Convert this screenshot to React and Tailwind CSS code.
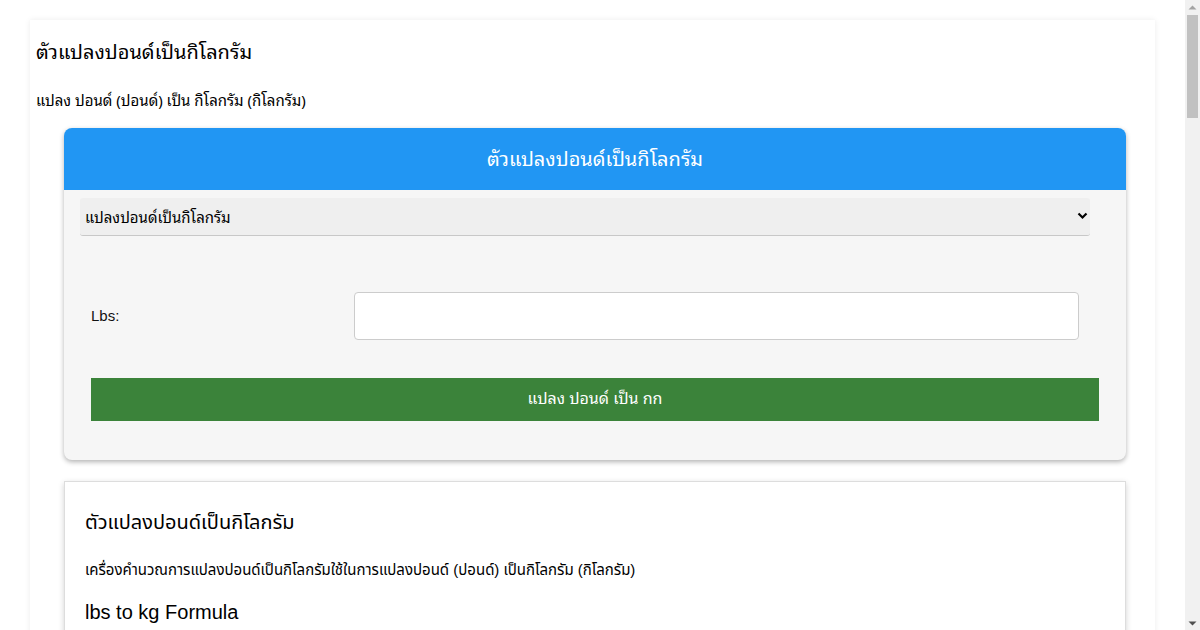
import React from 'react'

const Scrollbar = () => (
    <div className="w-[15px] h-[630px] bg-[#f1f1f1] flex flex-col items-center shrink-0">
        <svg className="mt-[5px]" width="9" height="5" viewBox="0 0 9 5">
            <path d="M0.5 4.5 L4.5 0.5 L8.5 4.5 Z" fill="#a3a3a3" />
        </svg>
        <div className="mt-[5px] w-[11px] h-[103px] bg-[#c1c1c1]" />
        <div className="flex-1" />
        <svg className="mb-[4px]" width="9" height="5" viewBox="0 0 9 5">
            <path d="M0.5 0.5 L4.5 4.5 L8.5 0.5 Z" fill="#505050" />
        </svg>
    </div>
)

export default function App() {
    const [lbs, setLbs] = React.useState('')
    return (
        <div className="flex h-[630px] overflow-hidden bg-white">
            <div className="w-[1185px] shrink-0 pt-5 pl-[30px] pr-[30px] font-['Liberation_Sans',sans-serif]">
                <div className="bg-white shadow-[0_0_6px_rgba(0,0,0,0.08)] pb-10">
                    <h1 className="pt-[15px] pl-[6px] text-[20px] leading-[30px] text-black font-['Noto_Sans_Thai_Looped','Noto_Sans',sans-serif]">
                        ตัวแปลงปอนด์เป็นกิโลกรัม
                    </h1>
                    <p className="mt-[24px] pl-[6px] text-[15px] leading-[20px] font-['Noto_Sans_Thai_Looped','Noto_Sans',sans-serif]">
                        แปลง ปอนด์ (ปอนด์) เป็น กิโลกรัม (กิโลกรัม)
                    </p>
                    <div className="ml-[34px] mr-[29px] mt-[19px] rounded-lg bg-[#f6f6f6] shadow-[0_2px_5px_rgba(0,0,0,0.3)] overflow-hidden">
                        <div className="h-[62px] pb-[4px] bg-[#2196f3] flex items-center justify-center text-white text-[20px] font-['Noto_Sans_Thai_Looped','Noto_Sans',sans-serif]">
                            ตัวแปลงปอนด์เป็นกิโลกรัม
                        </div>
                        <div className="px-4 pt-2 pb-[39px]">
                            <div className="relative w-[1010px]">
                                <select className="appearance-none w-full h-[38px] bg-[#efefef] rounded-[3px] border-b border-[#c8c8c8] pl-[5px] text-[15px] text-black font-['Noto_Sans_Thai_Looped','Noto_Sans',sans-serif] outline-none">
                                    <option>แปลงปอนด์เป็นกิโลกรัม</option>
                                </select>
                                <svg className="absolute right-[2px] top-[14px] pointer-events-none" width="11" height="8" viewBox="0 0 11 8">
                                    <path d="M1.5 1.5 L5.5 5.5 L9.5 1.5" stroke="#000" strokeWidth="2.2" fill="none" />
                                </svg>
                            </div>
                            <div className="flex items-center mt-[56px] pl-[11px]">
                                <label className="w-[263px] text-[15px] text-[#111]">Lbs:</label>
                                <input
                                    value={lbs}
                                    onChange={e => setLbs(e.target.value)}
                                    className="w-[725px] h-[48px] bg-white border border-[#cccccc] rounded-[4px] px-3 text-[15px] outline-none"
                                />
                            </div>
                            <button className="mt-[38px] ml-[11px] w-[1008px] h-[43px] pb-[6px] bg-[#3b833a] text-white text-[16px] font-['Noto_Sans_Thai_Looped','Noto_Sans',sans-serif]">
                                แปลง ปอนด์ เป็น กก
                            </button>
                        </div>
                    </div>
                    <div className="ml-[34px] mr-[29px] mt-[21px] bg-white border border-[#dddddd] shadow-[0_2px_6px_rgba(0,0,0,0.18)] px-5 pb-6 font-['Liberation_Sans','Noto_Sans_Thai',sans-serif]">
                        <h2 className="pt-[25px] text-[20px] leading-[30px]">ตัวแปลงปอนด์เป็นกิโลกรัม</h2>
                        <p className="mt-[23px] text-[15px] leading-[20px]">
                            เครื่องคำนวณการแปลงปอนด์เป็นกิโลกรัมใช้ในการแปลงปอนด์ (ปอนด์) เป็นกิโลกรัม (กิโลกรัม)
                        </p>
                        <h3 className="mt-[20px] text-[20px] leading-[24px]">lbs to kg Formula</h3>
                        <p className="mt-4 text-[15px]">kg = lbs × 0.45359237</p>
                    </div>
                </div>
            </div>
            <Scrollbar />
        </div>
    )
}
